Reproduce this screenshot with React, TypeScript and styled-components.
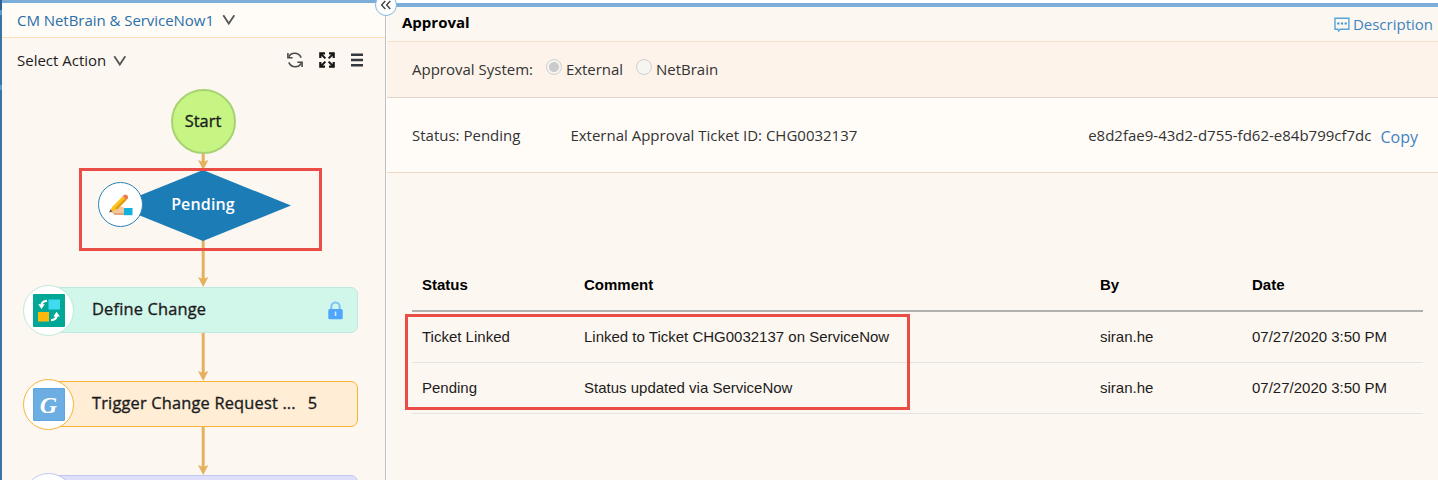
import React from "react";
import styled, { createGlobalStyle } from "styled-components";

const Global = createGlobalStyle`
  * { box-sizing: border-box; }
  html, body { margin: 0; padding: 0; }
  body { overflow: hidden; font-family: "Open Sans", sans-serif; color: #111; background: #fcf7f1; }
`;

const Page = styled.div`
  display: grid;
  grid-template-columns: 2px 383px 2px 1fr;
  width: 1438px;
  height: 480px;
  overflow: hidden;
  position: relative;
`;

const Strip = styled.div`
  background: linear-gradient(#2f6294 0 10px, #5b9ccb 10px 15px, #3a72a4 15px 85px, #5b9ccb 85px 90px, #3a72a4 90px);
`;

const Divider = styled.div`
  border-left: 1px solid #bfbfbf;
  background: #fff;
`;

const Text = styled.span<{ $size?: number; $weight?: number; $spacing?: number; $color?: string }>`
  font-size: ${(p) => p.$size ?? 15}px;
  font-weight: ${(p) => p.$weight ?? 400};
  letter-spacing: ${(p) => p.$spacing ?? 0}px;
  color: ${(p) => p.$color ?? "#1c1c1c"};
  line-height: 20px;
  white-space: nowrap;
`;

const NodeText = styled(Text)`
  font-size: 16.4px;
  -webkit-text-stroke: 0.35px currentColor;
`;

const Side = styled.aside`
  display: flex;
  flex-direction: column;
  border-top: 3px solid #7caed9;
  background: #fcf7f1;
`;

const SideTitle = styled.header`
  display: flex;
  align-items: center;
  gap: 8px;
  height: 35px;
  padding-left: 15px;
  background: #fffcf8;
  border-bottom: 1px solid #fbdfb7;
`;

const ActionBar = styled.div`
  display: flex;
  align-items: center;
  height: 44px;
  padding: 0 22px 0 15px;
  gap: 7px;
`;

const ChevronSlot = styled.div`
  display: flex;
  padding-top: 2px;
`;

const Tools = styled.div`
  display: flex;
  align-items: center;
  gap: 16px;
  margin-left: auto;
`;

const Flow = styled.div`
  position: relative;
  flex: 1;
`;

const Links = styled.svg`
  position: absolute;
  left: 0;
  top: 0;
`;

const StartNode = styled.div`
  position: absolute;
  left: 168.5px;
  top: 7px;
  width: 65px;
  height: 65px;
  display: flex;
  align-items: center;
  justify-content: center;
  padding-bottom: 2px;
  border: 2px solid #a9d272;
  border-radius: 50%;
  background: #c6f583;
`;

const Decision = styled.div`
  position: absolute;
  left: 113px;
  top: 88px;
  width: 176px;
  height: 71px;
  display: flex;
  align-items: center;
  justify-content: center;
  padding-bottom: 3px;
  background: #1c7cb5;
  clip-path: polygon(50% 0, 100% 50%, 50% 100%, 0 50%);
`;

const DecisionIcon = styled.div`
  position: absolute;
  left: 96px;
  top: 100px;
  width: 45px;
  height: 45px;
  display: flex;
  align-items: center;
  justify-content: center;
  border: 1px solid #2a81b8;
  border-radius: 50%;
  background: #fff;
`;

const Step = styled.div<{ $top: number; $line: string; $fill: string }>`
  position: absolute;
  left: 40px;
  top: ${(p) => p.$top}px;
  width: 316px;
  height: 46px;
  display: flex;
  align-items: center;
  padding: 0 14px 3px 49px;
  border: 1px solid ${(p) => p.$line};
  border-radius: 7px;
  background: ${(p) => p.$fill};
`;

const StepIcon = styled.div<{ $top: number; $line: string }>`
  position: absolute;
  left: 21px;
  top: ${(p) => p.$top - 2}px;
  width: 51px;
  height: 51px;
  display: flex;
  align-items: center;
  justify-content: center;
  border: 1px solid ${(p) => p.$line};
  border-radius: 50%;
  background: #fff;
`;

const Glyph = styled.div`
  display: flex;
  align-items: center;
  justify-content: center;
  width: 32px;
  height: 33px;
  border-radius: 1px;
  border: 1px solid #62a5dc;
  background: #6cade2;
  color: #fff;
  font: italic bold 24px/30px "Liberation Serif", serif;
`;

const Count = styled.div`
  margin-left: 12px;
  display: flex;
`;

const LockSlot = styled.div`
  display: flex;
  margin-left: auto;
  padding-top: 3px;
`;

const Callout = styled.div<{ $x: number; $y: number; $w: number; $h: number }>`
  position: absolute;
  left: ${(p) => p.$x}px;
  top: ${(p) => p.$y}px;
  width: ${(p) => p.$w}px;
  height: ${(p) => p.$h}px;
  border: 3px solid #ea4c46;
`;

const Collapse = styled.button`
  position: absolute;
  left: 375px;
  top: -6px;
  width: 22px;
  height: 22px;
  padding: 0;
  display: flex;
  align-items: center;
  justify-content: center;
  border: 1px solid #86b7e0;
  border-radius: 50%;
  background: #fff;
`;

const Main = styled.main`
  display: flex;
  flex-direction: column;
  border-top: 3px solid #fff;
`;

const MainHeader = styled.header`
  display: flex;
  justify-content: space-between;
  height: 39px;
  padding: 5px 5px 0 15px;
  border-top: 4px solid #7caed9;
  border-bottom: 1px solid #f3e1c8;
`;

const Link = styled.a`
  display: flex;
  align-items: center;
  gap: 3px;
  height: 24px;
`;

const SystemRow = styled.div`
  display: flex;
  align-items: center;
  height: 56px;
  padding: 0 0 2px 25px;
  background: #fdf3ea;
  border-bottom: 1px solid #dfd6cb;
`;

const Radio = styled.span<{ $on?: boolean; $gap: number }>`
  width: 16px;
  height: 16px;
  margin: -4px 4px 0 ${(p) => p.$gap}px;
  border: 1px solid #d0d0ce;
  border-radius: 50%;
  background: ${(p) => (p.$on ? "radial-gradient(circle, #cbcbcb 0 4.6px, #f6f5f2 5.4px)" : "#f6f5f2")};
`;

const StatusRow = styled.div`
  display: flex;
  align-items: center;
  height: 75px;
  padding: 0 20px 0 25px;
  background: #fffcf8;
  border-bottom: 1px solid #ead9c3;
`;

const TicketSlot = styled.div`
  display: flex;
  margin-left: 50px;
`;

const KeySlot = styled.div`
  display: flex;
  align-items: center;
  margin-left: auto;
  gap: 9px;
`;

const CopyLink = styled.a`
  display: flex;
  padding-top: 3px;
`;

const Table = styled.div`
  margin: 87px 15px 0 25px;
  font-family: "Liberation Sans", Arial, sans-serif;
`;

const Row = styled.div<{ $head?: boolean }>`
  display: grid;
  grid-template-columns: 162px 516px 152px 1fr;
  align-items: center;
  height: ${(p) => (p.$head ? 52 : 51)}px;
  padding-left: 10px;
  border-bottom: ${(p) => (p.$head ? "2px solid #b2b1b0" : "1px solid #e5e3e1")};
`;

const Chevron = () => (
  <svg width="14" height="12" viewBox="0 0 14 12" fill="none" stroke="#555" strokeWidth="1.8">
    <path d="M1.3 1.2 6.8 9.6 12.3 1.2" />
  </svg>
);

const RefreshIcon = () => (
  <svg width="16" height="16" viewBox="0 0 16 16" fill="none" stroke="#4a4a4a" strokeWidth="1.6">
    <path d="M2 4.8C3.6 .4 11.4-.6 14.2 5.6M14 11.2C12.4 15.6 4.6 16.6 1.8 10.4" />
    <path d="M.9 1V5.8H5.6M15.1 15V10.2H10.4" />
  </svg>
);

const ExpandIcon = () => (
  <svg width="16" height="16" viewBox="0 0 16 16" fill="none" stroke="#151515">
    <path d="M1.3 6V1.3H6M10 1.3H14.7V6M14.7 10V14.7H10M6 14.7H1.3V10" strokeWidth="2.2" />
    <path d="M2 2 6.4 6.4M14 2 9.6 6.4M14 14 9.6 9.6M2 14 6.4 9.6" strokeWidth="2" />
  </svg>
);

const MenuIcon = () => (
  <svg width="12" height="14" viewBox="0 0 12 14" fill="#343940">
    <path d="M0 0.5h12v2.6H0zM0 5.7h12v2.6H0zM0 11h12v2.6H0z" />
  </svg>
);

const HandIcon = () => (
  <svg width="26" height="24" viewBox="0 0 26 24">
    <path d="M1.5 17.5 5 13 10 12.5 17 15V22H7L4 20Z" fill="#f3c79d" />
    <path d="M5 20H16V22H7Z" fill="#dca77c" />
    <path d="M16 15H24.5V22.2H16Z" fill="#12b0dc" />
    <path d="M14.5 3.5 18.5 7 9 16.5 2.5 18.5 4.6 13.4Z" fill="#fcc316" />
    <path d="M16.8 5.5 18.5 7 9 16.5 7.2 15.2Z" fill="#e09a18" />
    <path d="M14.5 3.5 16.2 1.7Q17.6 .9 19.2 2.3T19.9 5.4L18.5 7Z" fill="#ec7c50" />
    <path d="M1 19.6 2.6 16.4 4.6 18.6Z" fill="#6b5136" />
  </svg>
);

const SwapIcon = () => (
  <svg width="32" height="33" viewBox="0 0 32 33">
    <rect width="32" height="33" rx="1" fill="#02a796" />
    <rect x="15.5" y="5.5" width="11.5" height="10" fill="#41daf1" />
    <rect x="5" y="18" width="11" height="9.5" fill="#fdb90b" />
    <g fill="none" stroke="#fff" strokeWidth="2.2">
      <path d="M14 6.8Q8.4 7 8.4 12M18 26.2Q23.6 26 23.6 21" />
    </g>
    <path d="M5.2 10.3H11.8L8.5 15ZM20.3 22.5H26.9L23.6 17.8Z" fill="#fff" />
  </svg>
);

const LockIcon = () => (
  <svg width="15" height="19" viewBox="0 0 15 19">
    <path d="M3.3 9V5.7A4.2 4.2 0 0 1 11.7 5.7V9" fill="none" stroke="#7fc0f8" strokeWidth="2" />
    <rect x=".3" y="8" width="14.4" height="10.3" rx="1.5" fill="#50a5fc" />
    <rect x="6.8" y="10.5" width="1.5" height="4.5" fill="#d5ecff" />
  </svg>
);

const CommentIcon = () => (
  <svg width="16" height="16" viewBox="0 0 16 16">
    <path d="M1 2.3H14.9V13.2H6.2L4.7 15 3.8 13.2H1Z" fill="none" stroke="#56a5d6" strokeWidth="1.4" />
    <path d="M3.2 6.6h2.2v2H3.2zM6.9 6.6h2.2v2H6.9zM10.6 6.6h2.2v2h-2.2z" fill="#4296cf" />
  </svg>
);

const arrows = [
  [75, 88],
  [159, 205],
  [251, 299],
  [345, 393],
];

const history = [
  { status: "Ticket Linked", comment: "Linked to Ticket CHG0032137 on ServiceNow", by: "siran.he", date: "07/27/2020 3:50 PM" },
  { status: "Pending", comment: "Status updated via ServiceNow", by: "siran.he", date: "07/27/2020 3:50 PM" },
];

export default function App() {
  return (
    <>
      <Global />
      <Page>
        <Strip />
        <Side>
          <SideTitle>
            <Text $color="#2a6fa8" $spacing={-0.04}>CM NetBrain &amp; ServiceNow1</Text>
            <Chevron />
          </SideTitle>
          <ActionBar>
            <Text>Select Action</Text>
            <ChevronSlot>
              <Chevron />
            </ChevronSlot>
            <Tools>
              <RefreshIcon />
              <ExpandIcon />
              <MenuIcon />
            </Tools>
          </ActionBar>
          <Flow>
            <Links width="383" height="398">
              {arrows.map(([from, to]) => (
                <g key={from} fill="#e6b15e">
                  <rect x="199.7" y={from - 4} width="3" height={to - from} />
                  <path d={`M196 ${to - 10} 201.2 ${to - 8} 206.4 ${to - 10} 201.2 ${to}Z`} />
                </g>
              ))}
            </Links>
            <StartNode>
              <NodeText>Start</NodeText>
            </StartNode>
            <Decision>
              <Text $size={16} $weight={600} $spacing={0.15} $color="#fff">Pending</Text>
            </Decision>
            <DecisionIcon>
              <HandIcon />
            </DecisionIcon>
            <Step $top={205} $line="#bfe9dc" $fill="#d1f6ea">
              <NodeText $spacing={0.18}>Define Change</NodeText>
              <LockSlot>
                <LockIcon />
              </LockSlot>
            </Step>
            <StepIcon $top={205} $line="#bfe9dc">
              <SwapIcon />
            </StepIcon>
            <Step $top={299} $line="#f6b436" $fill="#ffedd5">
              <NodeText $spacing={0.18}>Trigger Change Request ...</NodeText>
              <Count>
                <NodeText>5</NodeText>
              </Count>
            </Step>
            <StepIcon $top={299} $line="#f6b436">
              <Glyph>G</Glyph>
            </StepIcon>
            <Step $top={393} $line="#c3c8f2" $fill="#dedffc" />
            <StepIcon $top={393} $line="#c3c8f2" />
          </Flow>
        </Side>
        <Divider />
        <Main>
          <MainHeader>
            <Text $weight={700} $color="#000">Approval</Text>
            <Link>
              <CommentIcon />
              <Text $color="#3f83c0">Description</Text>
            </Link>
          </MainHeader>
          <SystemRow>
            <Text $color="#333">Approval System:</Text>
            <Radio $on $gap={13} />
            <Text $color="#333" $spacing={-0.06}>External</Text>
            <Radio $gap={13} />
            <Text $color="#333">NetBrain</Text>
          </SystemRow>
          <StatusRow>
            <Text $color="#333">Status: Pending</Text>
            <TicketSlot>
              <Text $color="#333">External Approval Ticket ID: CHG0032137</Text>
            </TicketSlot>
            <KeySlot>
              <Text $color="#333">e8d2fae9-43d2-d755-fd62-e84b799cf7dc</Text>
              <CopyLink>
                <Text $size={16} $color="#3f83c0">Copy</Text>
              </CopyLink>
            </KeySlot>
          </StatusRow>
          <Table>
            <Row $head>
              <Text $weight={700} $color="#000">Status</Text>
              <Text $weight={700} $color="#000">Comment</Text>
              <Text $weight={700} $color="#000">By</Text>
              <Text $weight={700} $color="#000">Date</Text>
            </Row>
            {history.map((h) => (
              <Row key={h.status}>
                <Text>{h.status}</Text>
                <Text>{h.comment}</Text>
                <Text>{h.by}</Text>
                <Text>{h.date}</Text>
              </Row>
            ))}
          </Table>
        </Main>
        <Collapse>
          <svg width="12" height="10" viewBox="0 0 12 10" fill="none" stroke="#444" strokeWidth="1.4">
            <path d="M5.3 1 1.6 5 5.3 9M10.3 1 6.6 5 10.3 9" />
          </svg>
        </Collapse>
        <Callout $x={79} $y={168} $w={243} $h={83} />
        <Callout $x={405} $y={314} $w={505} $h={96} />
      </Page>
    </>
  );
}
